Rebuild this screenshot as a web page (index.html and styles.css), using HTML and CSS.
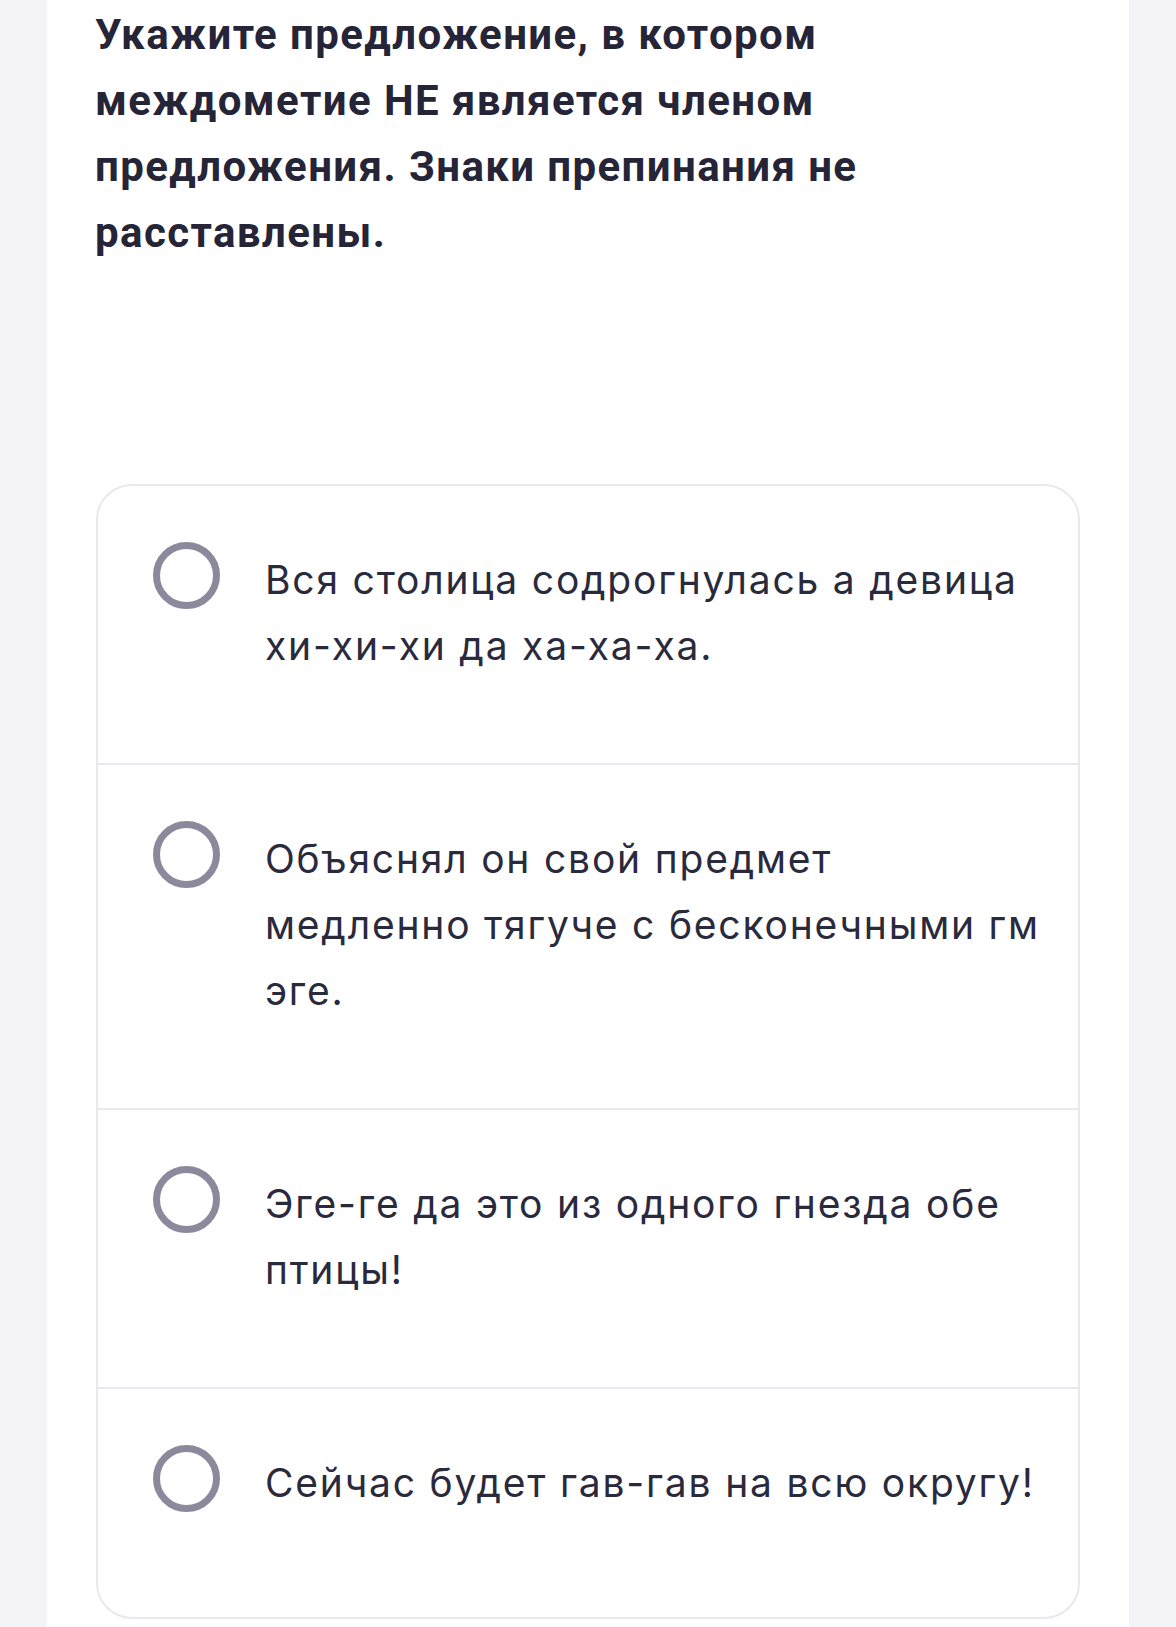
FILE: index.html
```html
<!DOCTYPE html>
<html lang="ru">
<head>
    <meta charset="UTF-8">
    <meta name="viewport" content="width=device-width, initial-scale=1.0">
    <title>Междометие</title>
    <link rel="stylesheet" href="styles.css">
</head>
<body>

    <div class="page">
        <h1 class="question">Укажите предложение, в котором междометие НЕ является членом предложения. Знаки препинания не расставлены.</h1>

        <div class="answers">
            <label class="answer">
                <span class="radio"></span>
                <span class="answer-text">Вся столица содрогнулась а девица хи-хи-хи да ха-ха-ха.</span>
            </label>
            <label class="answer">
                <span class="radio"></span>
                <span class="answer-text">Объяснял он свой предмет медленно тягуче с бесконечными гм эге.</span>
            </label>
            <label class="answer">
                <span class="radio"></span>
                <span class="answer-text">Эге-ге да это из одного гнезда обе птицы!</span>
            </label>
            <label class="answer">
                <span class="radio"></span>
                <span class="answer-text">Сейчас будет гав-гав на всю округу!</span>
            </label>
        </div>
    </div>

</body>
</html>
```

FILE: styles.css
```css
body {
    margin: 0;
    padding: 0;
    background-color: #f3f3f8;
    font-family: Inter, "Noto Sans", sans-serif;
    color: #27273a;
}

.page {
    width: 1082px;
    min-height: 1627px;
    margin-left: 47px;
    background-color: #fff;
    padding: 2px 49px 0 48px;
    box-sizing: border-box;
}

.question {
    margin: 0;
    font-family: Roboto, "Liberation Sans", sans-serif;
    font-size: 42px;
    font-weight: 700;
    letter-spacing: 1.4px;
    line-height: 66px;
    color: #262538;
    padding-right: 100px;
}

.answers {
    margin-top: 218px;
    margin-left: 1px;
    border: 2px solid #e8e8ee;
    border-radius: 36px;
    overflow: hidden;
}

.answer {
    display: flex;
    align-items: flex-start;
    padding: 56px 36px 84px 55px;
    border-top: 2px solid #e8e8ee;
    cursor: pointer;
}

.answer:first-child {
    border-top: none;
}

.answer:last-child {
    padding-bottom: 101px;
}

.radio {
    flex: none;
    width: 53px;
    height: 53px;
    border: 7px solid #8b899b;
    border-radius: 50%;
}

.answer-text {
    margin-top: 5px;
    margin-left: 45px;
    font-size: 39px;
    letter-spacing: 1.8px;
    line-height: 66px;
    color: #2a2a3d;
}
```
